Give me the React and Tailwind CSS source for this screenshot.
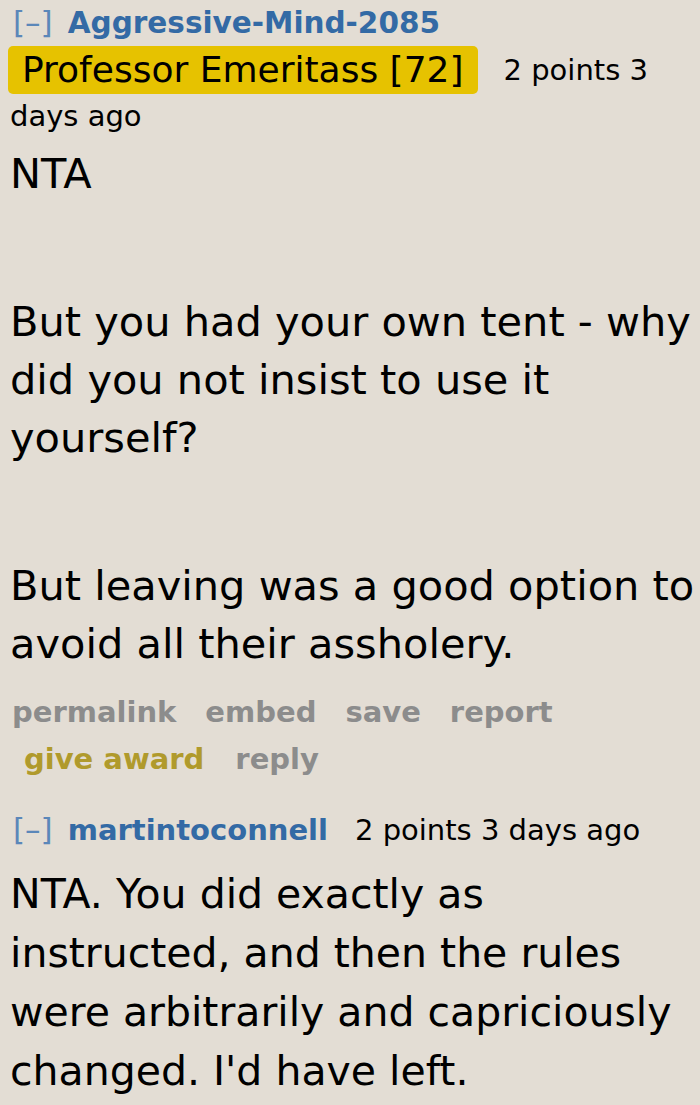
export default function App() {
  return (
    <div
      className="min-h-screen bg-[#e3ddd4] text-black pl-[10px] overflow-hidden"
      style={{ fontFamily: '"DejaVu Sans", Verdana, sans-serif' }}
    >
      {/* --- FIRST COMMENT --- */}
      <div className="text-[29px] leading-[45px]">
        <div className="whitespace-nowrap pl-[3px]">
          <span className="text-[#5b87b9] text-[31px]">[–]</span>
          <span className="ml-[15px] font-bold text-[#336aa5] text-[29.5px]">Aggressive-Mind-2085</span>
        </div>
        <div className="whitespace-nowrap flex items-center">
          <span className="inline-block -ml-[2px] bg-[#e6c200] rounded-[5px] px-[14px] h-[48px] leading-[48px] text-[36px]">
            Professor Emeritass [72]
          </span>
          <span className="ml-[26px]">2 points 3</span>
        </div>
        <div>days ago</div>
      </div>

      <div className="mt-[6px] flex flex-col gap-[16px] text-[41.5px] leading-[58px] whitespace-nowrap">
        <p>NTA</p>
        <p>&nbsp;</p>
        <p>
          But you had your own tent - why<br />
          did you not insist to use it<br />
          yourself?
        </p>
        <p>&nbsp;</p>
        <p>
          But leaving was a good option to<br />
          avoid all their assholery.
        </p>
      </div>

      {/* --- BUTTONS --- */}
      <div className="mt-[16px] text-[29px] leading-[47px] font-bold text-[#8c8c8c] pl-[2px]">
        <div className="flex gap-[29px]">
          <span>permalink</span>
          <span>embed</span>
          <span>save</span>
          <span>report</span>
        </div>
        <div className="flex gap-[31px] pl-[12px]">
          <span className="text-[#b09a2c]">give award</span>
          <span>reply</span>
        </div>
      </div>

      {/* --- SECOND COMMENT --- */}
      <div className="mt-[24px] text-[29px] leading-[45px] whitespace-nowrap pl-[3px]">
        <span className="text-[#5b87b9] text-[31px]">[–]</span>
        <span className="ml-[15px] font-bold text-[#336aa5]">martintoconnell</span>
        <span className="ml-[27px]">2 points 3 days ago</span>
      </div>
      <div className="mt-[12px] text-[41px] leading-[59px] whitespace-nowrap">
        <p>
          NTA. You did exactly as<br />
          instructed, and then the rules<br />
          were arbitrarily and capriciously<br />
          changed. I'd have left.
        </p>
      </div>
    </div>
  );
}
